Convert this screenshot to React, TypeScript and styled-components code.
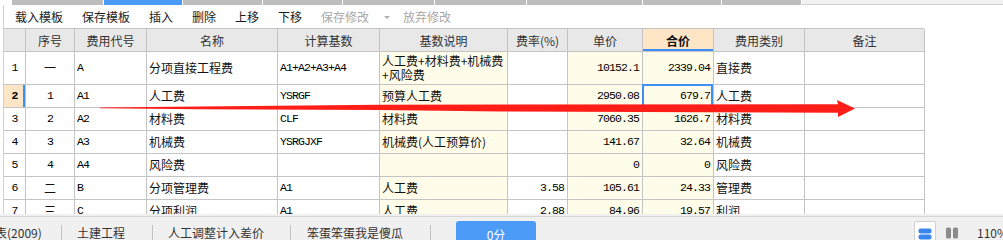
import React from 'react';
import styled, { createGlobalStyle, css } from 'styled-components';

const GlobalStyle = createGlobalStyle`
  html, body {
    margin: 0;
    padding: 0;
    background: #ffffff;
  }
  body {
    font-family: "Noto Sans CJK SC", "Noto Sans", sans-serif;
    font-size: 12px;
    color: #222;
  }
`;

const colors = {
  line: '#c4c4c4',
  head: '#e8e8e8',
  yellow: '#fffde9',
  orange: '#fde5c6',
  blue: '#3d8ef5',
  bar: '#f0f0f0',
};

const COLS = [22, 49, 72, 131, 102, 128, 60, 75, 71, 91, 120];

const Screen = styled.div`
  position: relative;
  width: 1003px;
  height: 240px;
  overflow: hidden;
  display: flex;
  flex-direction: column;
  background: #fff;
`;

const TabStrip = styled.div`
  display: flex;
  gap: 1px;
  height: 5px;
  padding-left: 12px;
  flex-shrink: 0;
`;

const Tab = styled.div<{ $w: number; $active?: boolean }>`
  width: ${p => p.$w}px;
  background: ${p => (p.$active ? '#4a9bf7' : '#bdbdbd')};
`;

const TabFiller = styled.div`
  flex: 1;
  box-sizing: border-box;
  background: #f2f2f2;
  border-bottom: 1px solid #cfcfcf;
`;

const Main = styled.div`
  margin-left: 3px;
  border-left: 1px solid #d2d2d2;
  display: flex;
  flex-direction: column;
  flex-shrink: 0;
`;

const Toolbar = styled.div`
  display: flex;
  align-items: center;
  gap: 19px;
  height: 23px;
  padding-left: 11px;
`;

const ToolItem = styled.span<{ $disabled?: boolean }>`
  font-size: 12px;
  line-height: 14px;
  color: ${p => (p.$disabled ? '#a8a8a8' : '#1c1c1c')};
  white-space: nowrap;
`;

const Caret = styled.span`
  width: 0;
  height: 0;
  margin: 1px -6px 0 -4px;
  border-left: 3px solid transparent;
  border-right: 3px solid transparent;
  border-top: 3px solid #b0b0b0;
`;

const TableArea = styled.div`
  height: 186px;
  overflow: hidden;
`;

const Grid = styled.div`
  display: grid;
  width: 920px;
  grid-template-columns: ${COLS.map(c => `${c}px`).join(' ')};
  grid-template-rows: 23px 33px repeat(6, 23px);
  border-top: 1px solid ${colors.line};
`;

const HeadCell = styled.div<{ $active?: boolean }>`
  box-sizing: border-box;
  display: flex;
  align-items: center;
  justify-content: center;
  border-right: 1px solid ${colors.line};
  border-bottom: 1px solid ${colors.line};
  background: ${p => (p.$active ? colors.orange : colors.head)};
  color: ${p => (p.$active ? '#111' : '#333')};
  font-weight: ${p => (p.$active ? 700 : 400)};
  font-size: 12px;
  white-space: nowrap;
  ${p =>
    p.$active &&
    css`
      box-shadow: inset 0 -2px 0 ${colors.blue};
    `}
`;

type Align = 'left' | 'center' | 'right';

const Cell = styled.div<{
  $align?: Align;
  $tone?: 'yellow' | 'orange';
  $mono?: boolean;
  $bold?: boolean;
  $selected?: boolean;
  $marker?: boolean;
}>`
  position: relative;
  box-sizing: border-box;
  display: flex;
  align-items: center;
  justify-content: ${p =>
    p.$align === 'right' ? 'flex-end' : p.$align === 'center' ? 'center' : 'flex-start'};
  padding: ${p => (p.$align === 'right' ? '0 3px 0 0' : p.$align === 'center' ? '0' : '0 0 0 2px')};
  border-right: 1px solid ${colors.line};
  border-bottom: 1px solid ${colors.line};
  background: ${p =>
    p.$tone === 'yellow' ? colors.yellow : p.$tone === 'orange' ? colors.orange : '#fff'};
  color: #111;
  font-size: 12px;
  line-height: 14px;
  white-space: nowrap;
  overflow: hidden;
  font-weight: ${p => (p.$bold ? 700 : 400)};
  ${p =>
    p.$mono &&
    css`
      font-family: "Liberation Mono", "DejaVu Sans Mono", monospace;
      font-size: 11.5px;
      letter-spacing: -0.9px;
      color: #000;
    `}
  ${p =>
    p.$marker &&
    css`
      box-shadow: inset -2px 0 0 ${colors.blue};
    `}
  ${p =>
    p.$selected &&
    css`
      overflow: visible;
      &::after {
        content: '';
        position: absolute;
        top: -1px;
        left: -1px;
        right: 0;
        bottom: 0;
        border: 2px solid ${colors.blue};
        pointer-events: none;
      }
    `}
`;

const Gutter = styled.div`
  height: 2px;
  background: ${colors.bar};
  flex-shrink: 0;
`;

const StatusBar = styled.div`
  display: flex;
  align-items: center;
  height: 28px;
  flex-shrink: 0;
  border-top: 1px solid #d6d6d6;
  background: ${colors.bar};
  font-size: 12px;
  color: #333;
`;

const StatusItem = styled.div<{ $w: number; $pad?: number; $shift?: number }>`
  width: ${p => p.$w}px;
  padding-left: ${p => p.$pad ?? 15}px;
  margin-left: ${p => p.$shift ?? 0}px;
  box-sizing: border-box;
  white-space: nowrap;
  margin-top: 2px;
`;

const Sep = styled.div`
  width: 1px;
  height: 20px;
  margin-top: 8px;
  background: #c2c2c2;
`;

const ScoreTab = styled.div`
  align-self: stretch;
  margin: 4px 0 0 25px;
  width: 80px;
  display: flex;
  align-items: center;
  justify-content: center;
  padding-top: 2px;
  background: #4b9bf7;
  border-radius: 3px 3px 0 0;
  color: #fff;
`;

const ViewButton = styled.div<{ $on?: boolean }>`
  align-self: stretch;
  margin-top: 4px;
  display: flex;
  align-items: center;
  justify-content: center;
  box-sizing: border-box;
  width: ${p => (p.$on ? 22 : 12)}px;
  margin-left: ${p => (p.$on ? 'auto' : '10px')};
  background: ${p => (p.$on ? '#fff' : 'transparent')};
  border: ${p => (p.$on ? '1px solid #d0d0d0' : 'none')};
  border-bottom: none;
  border-radius: 2px 2px 0 0;
`;

const ZoomText = styled.div`
  width: 26px;
  margin-left: 19px;
  margin-top: 2px;
  white-space: nowrap;
`;

const ArrowLayer = styled.svg`
  position: absolute;
  left: 0;
  top: 0;
  pointer-events: none;
`;

type Row = {
  n: string;
  seq: string;
  code: string;
  name: string;
  base: string;
  desc: React.ReactNode;
  rate: string;
  price: string;
  total: string;
  cat: string;
};

const rows: Row[] = [
  {
    n: '1', seq: '一', code: 'A', name: '分项直接工程费', base: 'A1+A2+A3+A4',
    desc: (<span>人工费+材料费+机械费<br />+风险费</span>),
    rate: '', price: '10152.1', total: '2339.04', cat: '直接费',
  },
  { n: '2', seq: '1', code: 'A1', name: '人工费', base: 'YSRGF', desc: '预算人工费', rate: '', price: '2950.08', total: '679.7', cat: '人工费' },
  { n: '3', seq: '2', code: 'A2', name: '材料费', base: 'CLF', desc: '材料费', rate: '', price: '7060.35', total: '1626.7', cat: '材料费' },
  { n: '4', seq: '3', code: 'A3', name: '机械费', base: 'YSRGJXF', desc: '机械费(人工预算价)', rate: '', price: '141.67', total: '32.64', cat: '机械费' },
  { n: '5', seq: '4', code: 'A4', name: '风险费', base: '', desc: '', rate: '', price: '0', total: '0', cat: '风险费' },
  { n: '6', seq: '二', code: 'B', name: '分项管理费', base: 'A1', desc: '人工费', rate: '3.58', price: '105.61', total: '24.33', cat: '管理费' },
  { n: '7', seq: '三', code: 'C', name: '分项利润', base: 'A1', desc: '人工费', rate: '2.88', price: '84.96', total: '19.57', cat: '利润' },
];

const headers = ['', '序号', '费用代号', '名称', '计算基数', '基数说明', '费率(%)', '单价', '合价', '费用类别', '备注'];

const tabWidths = [91, 78, 79, 79, 91, 91, 115, 78, 79];

const isDigit = (s: string) => /^[0-9]/.test(s);

const App: React.FC = () => {
  const activeRow = '2';

  return (
    <Screen>
      <GlobalStyle />
      <TabStrip>
        {tabWidths.map((w, i) => (
          <Tab key={i} $w={w} $active={i === 1} />
        ))}
        <TabFiller />
      </TabStrip>

      <Main>
        <Toolbar>
          <ToolItem>载入模板</ToolItem>
          <ToolItem>保存模板</ToolItem>
          <ToolItem>插入</ToolItem>
          <ToolItem>删除</ToolItem>
          <ToolItem>上移</ToolItem>
          <ToolItem>下移</ToolItem>
          <ToolItem $disabled>保存修改</ToolItem>
          <Caret />
          <ToolItem $disabled>放弃修改</ToolItem>
        </Toolbar>

        <TableArea>
          <Grid>
            {headers.map((h, i) => (
              <HeadCell key={i} $active={h === '合价'}>{h}</HeadCell>
            ))}
            {rows.map(r => {
              const active = r.n === activeRow;
              return (
                <React.Fragment key={r.n}>
                  <Cell $align="center" $mono $tone={active ? 'orange' : undefined} $bold={active} $marker={active}>
                    {r.n}
                  </Cell>
                  <Cell $align="center" $mono={isDigit(r.seq)}>{r.seq}</Cell>
                  <Cell $mono>{r.code}</Cell>
                  <Cell>{r.name}</Cell>
                  <Cell $mono>{r.base}</Cell>
                  <Cell $tone="yellow">{r.desc}</Cell>
                  <Cell $align="right" $mono>{r.rate}</Cell>
                  <Cell $align="right" $mono $tone="yellow">{r.price}</Cell>
                  <Cell $align="right" $mono $tone="yellow" $selected={active}>{r.total}</Cell>
                  <Cell>{r.cat}</Cell>
                  <Cell />
                </React.Fragment>
              );
            })}
          </Grid>
        </TableArea>
      </Main>

      <Gutter />
      <StatusBar>
        <StatusItem $w={66} $pad={0} $shift={-5}>表(2009)</StatusItem>
        <Sep />
        <StatusItem $w={90}>土建工程</StatusItem>
        <Sep />
        <StatusItem $w={137}>人工调整计入差价</StatusItem>
        <Sep />
        <StatusItem $w={139} $pad={16}>笨蛋笨蛋我是傻瓜</StatusItem>
        <Sep />
        <ScoreTab>0分</ScoreTab>
        <ViewButton $on>
          <svg width="14" height="12" viewBox="0 0 14 12">
            <rect x="0.5" y="0.5" width="13" height="5" rx="2" fill="#3a86ee" />
            <rect x="0.5" y="6.5" width="13" height="5" rx="2" fill="#3a86ee" />
          </svg>
        </ViewButton>
        <ViewButton>
          <svg width="12" height="12" viewBox="0 0 12 12">
            <rect x="0" y="0.5" width="5" height="11" rx="1.5" fill="#8c8c8c" />
            <rect x="7" y="0.5" width="5" height="11" rx="1.5" fill="#8c8c8c" />
          </svg>
        </ViewButton>
        <ZoomText>110%</ZoomText>
      </StatusBar>

      <ArrowLayer width="1003" height="240" viewBox="0 0 1003 240">
        <polygon
          fill="#ff1d18"
          points="100,107.4 200,106.6 380,104.8 500,104.6 838,104.2 837,100 855,108.6 838,117 838,112.8 500,111.4 380,110 200,109.2 100,108.3"
        />
      </ArrowLayer>
    </Screen>
  );
};

export default App;
